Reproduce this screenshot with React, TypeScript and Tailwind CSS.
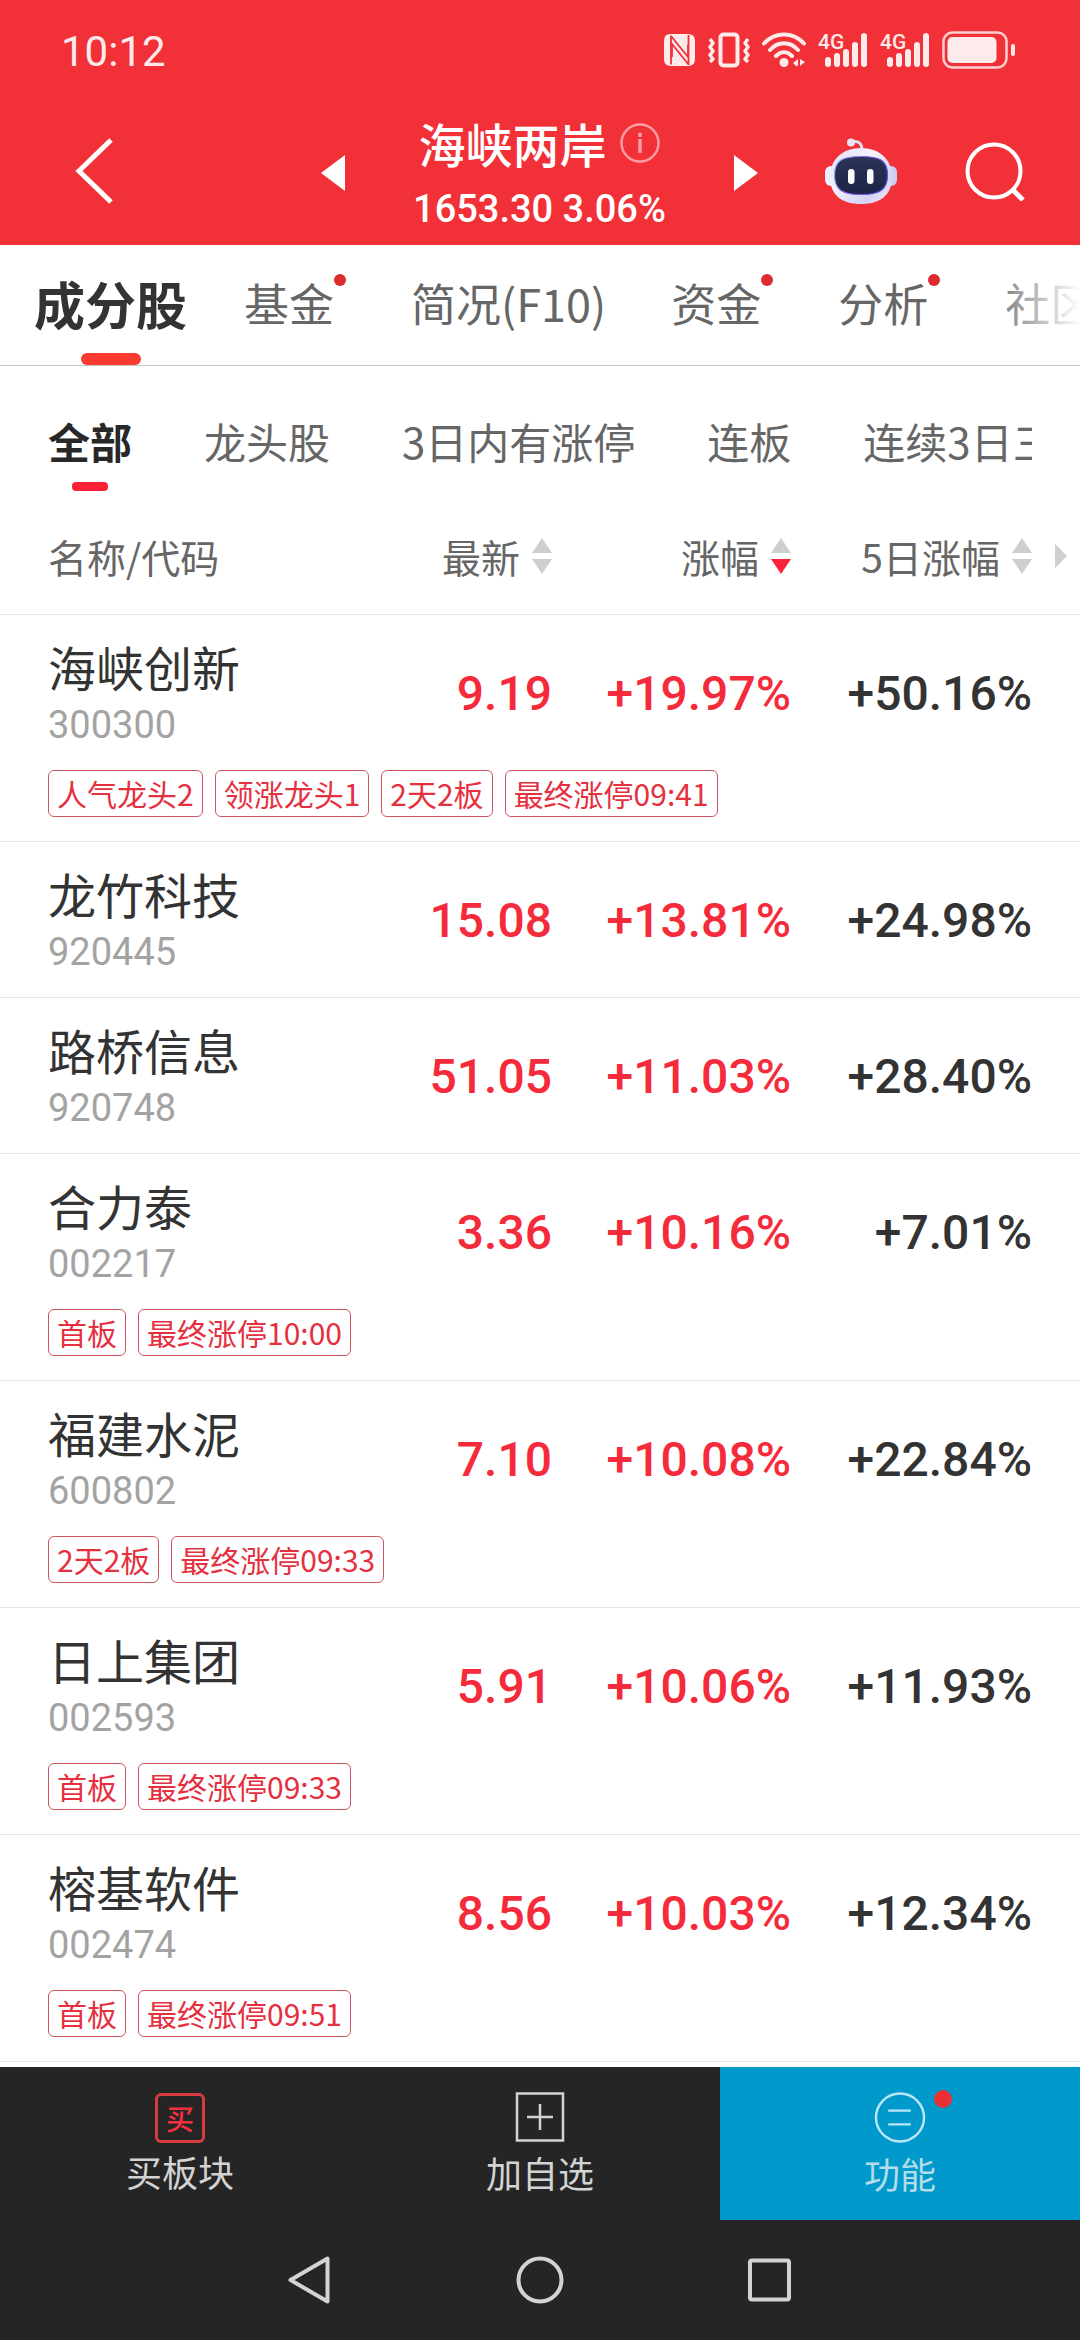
import React from "react";

type Stock = {
  name: string;
  code: string;
  price: string;
  change: string;
  fiveDay: string;
  tags?: string[];
};

const stocks: Stock[] = [
  { name: "海峡创新", code: "300300", price: "9.19", change: "+19.97%", fiveDay: "+50.16%", tags: ["人气龙头2", "领涨龙头1", "2天2板", "最终涨停09:41"] },
  { name: "龙竹科技", code: "920445", price: "15.08", change: "+13.81%", fiveDay: "+24.98%" },
  { name: "路桥信息", code: "920748", price: "51.05", change: "+11.03%", fiveDay: "+28.40%" },
  { name: "合力泰", code: "002217", price: "3.36", change: "+10.16%", fiveDay: "+7.01%", tags: ["首板", "最终涨停10:00"] },
  { name: "福建水泥", code: "600802", price: "7.10", change: "+10.08%", fiveDay: "+22.84%", tags: ["2天2板", "最终涨停09:33"] },
  { name: "日上集团", code: "002593", price: "5.91", change: "+10.06%", fiveDay: "+11.93%", tags: ["首板", "最终涨停09:33"] },
  { name: "榕基软件", code: "002474", price: "8.56", change: "+10.03%", fiveDay: "+12.34%", tags: ["首板", "最终涨停09:51"] },
];

const tabs = [
  { label: "基金", dot: true },
  { label: "简况(F10)", dot: false },
  { label: "资金", dot: true },
  { label: "分析", dot: true },
  { label: "社区", dot: false },
];

const filters = ["龙头股", "3日内有涨停", "连板", "连续3日三连板"];

function Signal() {
  return (
    <svg className="h-9 w-[50px] overflow-visible" viewBox="0 0 50 36" fill="#fdeaea" aria-hidden="true">
      <text x="0" y="17" fontSize="21" fontWeight="500" fontFamily="Roboto, sans-serif">4G</text>
      <rect x="7" y="25" width="6" height="10" rx="3" />
      <rect x="16" y="21" width="6" height="14" rx="3" />
      <rect x="25" y="17" width="6" height="18" rx="3" />
      <rect x="34" y="10" width="6" height="25" rx="3" />
      <rect x="43" y="1" width="6" height="34" rx="3" />
    </svg>
  );
}

function StatusBar() {
  return (
    <div className="flex h-[100px] items-center justify-between pl-[61px] pr-[64px] text-[#fdeaea]">
      <time className="pt-1 font-['Roboto',sans-serif] text-[42px] leading-[48px]">10:12</time>
      <div className="flex items-center gap-3">
        <svg className="h-8 w-8" viewBox="0 0 32 32" aria-hidden="true">
          <path d="M7 0h16c6 0 8 2 8 8v16c0 6-2 8-8 8H8c-6 0-8-2-8-8V8c0-6 2-8 7-8z" fill="#fdeaea" />
          <path d="M7 1.500v29M7 2l17 21V10.500M24.500 1v30M24.500 30.500L8 10v13" stroke="#f03038" strokeWidth="1.800" fill="none" />
        </svg>
        <svg className="h-9 w-[42px]" viewBox="0 0 42 36" fill="none" stroke="#fdeaea" aria-hidden="true">
          <rect x="12.500" y="2.500" width="17" height="31" rx="3" strokeWidth="4" />
          <path d="M2 7l3 4-3 4 3 4-3 4 3 4-3 3M40 7l-3 4 3 4-3 4 3 4-3 4 3 3" strokeWidth="3.500" strokeLinejoin="round" />
        </svg>
        <svg className="h-9 w-11" viewBox="0 0 44 36" fill="none" stroke="#fdeaea" strokeLinecap="round" aria-hidden="true">
          <path d="M2 11.500c11-12 29-12 40 0M8 18c8-9 20-9 28 0M14 24c5-5 11-5 16 0" strokeWidth="4" />
          <circle cx="22" cy="30.500" r="4.500" fill="#fdeaea" stroke="none" />
          <path d="M31 31l5-4v7h-2zM38 27v7l5-4z" fill="#fdeaea" stroke="none" />
        </svg>
        <Signal />
        <Signal />
        <svg className="h-[38px] w-[74px]" viewBox="0 0 74 38" aria-hidden="true">
          <rect x="1.500" y="1.500" width="63" height="35" rx="9" fill="none" stroke="#fdd0d2" strokeWidth="2.500" />
          <rect x="5.500" y="6" width="49" height="26" rx="5" fill="#fdeaea" />
          <rect x="69" y="13" width="4" height="12" rx="2" fill="#fdeaea" />
        </svg>
      </div>
    </div>
  );
}

function Robot() {
  return (
    <svg className="h-[66px] w-[72px]" viewBox="0 0 72 66" aria-hidden="true">
      <defs>
        <linearGradient id="shell" x1="0" y1="0" x2="1" y2="1">
          <stop offset="0" stopColor="#dfe0f8" />
          <stop offset="0.400" stopColor="#f4f2fc" />
          <stop offset="0.750" stopColor="#d5d3f5" />
          <stop offset="1" stopColor="#f0eefb" />
        </linearGradient>
        <linearGradient id="rim" x1="0" y1="0" x2="1" y2="0.400">
          <stop offset="0" stopColor="#8fc3ee" />
          <stop offset="0.500" stopColor="#8a5be8" />
          <stop offset="1" stopColor="#5a50d8" />
        </linearGradient>
        <linearGradient id="visor" x1="0" y1="0" x2="0" y2="1">
          <stop offset="0" stopColor="#2c3357" />
          <stop offset="1" stopColor="#1c2447" />
        </linearGradient>
      </defs>
      <path d="M26 4c7-2 11 1 11 8" fill="none" stroke="#e3dcf4" strokeWidth="3" />
      <circle cx="26" cy="4.500" r="4" fill="#e8e4f8" />
      <rect x="0" y="28" width="12" height="20" rx="6" fill="#eef0fd" />
      <rect x="60" y="28" width="12" height="20" rx="6" fill="#cfcdf4" />
      <path d="M36 10c18 0 31 11 31 29 0 19-13 27-31 27S5 58 5 39c0-18 13-29 31-29z" fill="url(#shell)" />
      <path d="M36 18.500c19 0 26.500 4 26.500 18.500S55 56.500 36 56.500 9.500 51.500 9.500 37s7.500-18.500 26.500-18.500z" fill="url(#visor)" stroke="url(#rim)" strokeWidth="1.200" />
      <rect x="23" y="31" width="6.500" height="15" rx="3.250" fill="#fff" />
      <rect x="42" y="31" width="6.500" height="15" rx="3.250" fill="#fff" />
    </svg>
  );
}

function TitleBar() {
  return (
    <div className="grid h-[145px] grid-cols-[321px_1fr_322px] text-white">
      <div className="flex items-center pb-1 pl-[72px]">
        <button type="button" aria-label="返回">
          <svg className="h-[66px] w-11" viewBox="0 0 44 66" fill="none" stroke="#fff" strokeWidth="5" aria-hidden="true">
            <path d="M39 2L7 33l32 31" />
          </svg>
        </button>
      </div>
      <div className="flex items-center justify-between">
        <button type="button" aria-label="上一个板块">
          <svg className="h-9 w-6" viewBox="0 0 24 36" fill="#fff" aria-hidden="true"><path d="M24 0v36L0 18z" /></svg>
        </button>
        <div className="flex flex-col items-center pt-1">
          <div className="flex items-center gap-[14px]">
            <h1 className="text-[47px] font-medium leading-[68px]">海峡两岸</h1>
            <button type="button" aria-label="板块说明">
              <svg className="h-10 w-10" viewBox="0 0 40 40" fill="none" stroke="#fb9da2" strokeWidth="2.500" aria-hidden="true">
                <circle cx="20" cy="20" r="18.500" />
                <path d="M20 16v14M20 10v4" strokeWidth="3.500" />
              </svg>
            </button>
          </div>
          <p className="font-['Roboto',sans-serif] text-[38px] font-medium leading-[64px]">1653.30 3.06%</p>
        </div>
        <button type="button" aria-label="下一个板块">
          <svg className="h-9 w-6" viewBox="0 0 24 36" fill="#fff" aria-hidden="true"><path d="M0 0v36l24-18z" /></svg>
        </button>
      </div>
      <div className="flex items-center justify-end gap-[68px] pb-1 pr-[54px]">
        <button type="button" aria-label="智能助手"><Robot /></button>
        <button type="button" aria-label="搜索">
          <svg className="h-[60px] w-[61px]" viewBox="0 0 61 60" fill="none" stroke="#fff" strokeWidth="4" aria-hidden="true">
            <circle cx="29" cy="30" r="26.500" />
            <path d="M47 48l11 11" strokeWidth="5" />
          </svg>
        </button>
      </div>
    </div>
  );
}

function SortIcon({ active = false }: { active?: boolean }) {
  return (
    <svg className="h-9 w-5" viewBox="0 0 20 36" aria-hidden="true">
      <path d="M10 0l10 15H0z" fill="#cfcfcf" />
      <path d="M0 21h20L10 36z" fill={active ? "#fb2138" : "#cfcfcf"} />
    </svg>
  );
}

function SortHeader({ label, active }: { label: string; active?: boolean }) {
  return (
    <th scope="col" className="p-0 font-normal">
      <button type="button" className="ml-auto flex items-center gap-3 whitespace-nowrap">
        {label}
        <SortIcon active={active} />
      </button>
    </th>
  );
}

function StockTable() {
  return (
    <table className="w-full table-fixed border-collapse">
      <colgroup>
        <col />
        <col className="w-[220px]" />
        <col className="w-[239px]" />
        <col className="w-[241px]" />
        <col className="w-12" />
      </colgroup>
      <thead>
        <tr className="h-[116px] border-b border-[#e6e6e6] text-[39px] leading-[48px] text-[#666]">
          <th scope="col" className="p-0 pl-12 text-left font-normal">名称/代码</th>
          <SortHeader label="最新" />
          <SortHeader label="涨幅" active />
          <SortHeader label="5日涨幅" />
          <td className="p-0">
            <button type="button" aria-label="更多列" className="ml-[23px] block">
              <svg className="h-6 w-3" viewBox="0 0 12 24" fill="#cfcfcf" aria-hidden="true"><path d="M0 0v24l12-12z" /></svg>
            </button>
          </td>
        </tr>
      </thead>
      {stocks.map((s) => (
        <tbody key={s.code} className="border-b border-[#e6e6e6]">
          <tr className="h-[156px] text-right font-['Roboto',sans-serif] text-[48px] font-medium leading-[60px]">
            <th scope="row" className="whitespace-nowrap p-0 pl-12 text-left font-normal">
              <a href={"#" + s.code} className="block">
                <span className="block font-['Noto_Sans_CJK_SC',sans-serif] text-[48px] leading-[66px] text-[#333]">{s.name}</span>
                <span className="block text-[38px] leading-[52px] text-[#a3a3a3]">{s.code}</span>
              </a>
            </th>
            <td className="p-0 pt-1 text-[#f52a3a]">{s.price}</td>
            <td className="p-0 pt-1 text-[#f52a3a]">{s.change}</td>
            <td className="p-0 pt-1 text-[#333]">{s.fiveDay}</td>
            <td className="p-0" />
          </tr>
          {s.tags && (
            <tr className="h-[71px] align-top">
              <td colSpan={5} className="p-0 pl-12">
                <ul className="flex gap-3">
                  {s.tags.map((t) => (
                    <li key={t} className="rounded-md border border-[#cc5560] px-2 text-[30px] leading-[45px] text-[#e5303f]">{t}</li>
                  ))}
                </ul>
              </td>
            </tr>
          )}
        </tbody>
      ))}
    </table>
  );
}

export default function App() {
  return (
    <div className="flex min-h-screen flex-col bg-white font-['Noto_Sans_CJK_SC',sans-serif]">
      <header className="bg-[#f13038]">
        <StatusBar />
        <TitleBar />
      </header>

      <nav className="relative flex h-[121px] gap-[57px] overflow-hidden whitespace-nowrap border-b border-[#c6c6c6] pl-[34px] text-[45px] text-[#666]">
        <button type="button" aria-current="page" className="flex shrink-0 flex-col items-center justify-between pt-[22px] text-[51px] font-bold leading-[72px] text-[#333]">
          成分股
          <span className="h-3 w-[60px] rounded-full bg-[#fb3b30]" />
        </button>
        {tabs.map((t) => (
          <button key={t.label} type="button" className="flex shrink-0 items-start pr-2 pt-[22px] leading-[72px]">
            {t.label}
            {t.dot && <span className="mt-[7px] h-3 w-3 rounded-full bg-[#dc2c30]" />}
          </button>
        ))}
        <div className="pointer-events-none absolute inset-y-0 right-0 w-24 bg-linear-to-r from-white/0 to-white" />
      </nav>

      <main className="flex-1">
        <div className="mx-12 flex h-[132px] gap-[72px] overflow-hidden whitespace-nowrap pt-[50px] text-[42px] leading-[50px] text-[#666]">
          <button type="button" aria-pressed="true" className="flex shrink-0 flex-col items-center gap-4 font-bold text-[#282828]">
            全部
            <span className="h-[9px] w-9 rounded-sm bg-[#fb2138]" />
          </button>
          {filters.map((f) => (
            <button key={f} type="button" className="shrink-0 self-start">{f}</button>
          ))}
        </div>
        <StockTable />
      </main>

      <footer className="bg-[#252525]">
        <div className="grid h-[153px] grid-cols-3 text-[36px] leading-[44px] text-[#d3d3d3]">
          <button type="button" className="flex flex-col items-center gap-[6px] pt-[26px]">
            <span className="flex h-[50px] w-[50px] items-center justify-center rounded-md border-3 border-[#d93a42] text-[28px] font-medium leading-[30px] text-[#f5303e]">买</span>
            买板块
          </button>
          <button type="button" className="flex flex-col items-center gap-2 pt-[25px]">
            <svg className="h-[50px] w-[50px]" viewBox="0 0 50 50" fill="none" stroke="#d3d3d3" strokeWidth="2.500" aria-hidden="true">
              <path d="M2 1.500h46v47H2zM12 25h26M25 12v26" />
            </svg>
            加自选
          </button>
          <button type="button" className="flex flex-col items-center gap-2 bg-[#0099cc] pt-[25px] text-[#b4dcea]">
            <span className="relative">
              <svg className="h-[51px] w-[52px]" viewBox="0 0 52 52" fill="none" stroke="#b9e6f5" strokeWidth="2.500" aria-hidden="true">
                <circle cx="26" cy="26" r="24.500" />
                <path d="M14 19h23M14 33h23" />
              </svg>
              <span className="absolute -right-[26px] -top-[2px] h-[18px] w-[18px] rounded-full bg-[#e93135]" />
            </span>
            功能
          </button>
        </div>
        <div className="flex h-[120px] items-center justify-center gap-[182px]">
          <button type="button" aria-label="返回">
            <svg className="h-12 w-12" viewBox="0 0 48 48" fill="none" stroke="#d3d3d3" strokeWidth="4" strokeLinejoin="round" aria-hidden="true"><path d="M41.500 2.500v43L4.500 24z" /></svg>
          </button>
          <button type="button" aria-label="主页">
            <svg className="h-12 w-12" viewBox="0 0 48 48" fill="none" stroke="#d3d3d3" strokeWidth="4" aria-hidden="true"><circle cx="24" cy="24" r="21.500" /></svg>
          </button>
          <button type="button" aria-label="最近任务">
            <svg className="h-12 w-12" viewBox="0 0 48 48" fill="none" stroke="#d3d3d3" strokeWidth="4" aria-hidden="true"><rect x="4" y="4.500" width="39" height="39" rx="2" /></svg>
          </button>
        </div>
      </footer>
    </div>
  );
}
